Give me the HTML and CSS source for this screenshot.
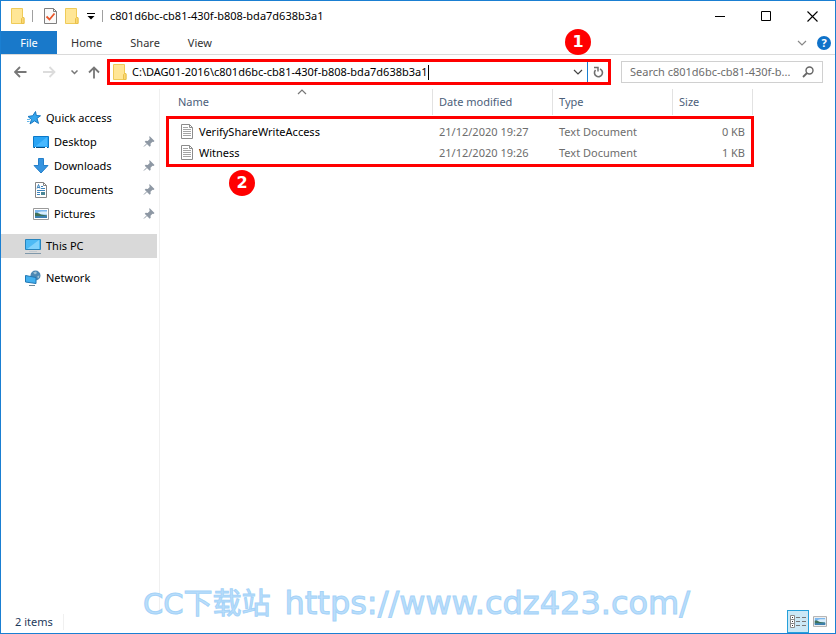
FILE: index.html
```
<!DOCTYPE html>
<html lang="en">

<head>
    <meta charset="UTF-8">
    <meta name="viewport" content="width=device-width, initial-scale=1.0">
    <title>c801d6bc-cb81-430f-b808-bda7d638b3a1</title>
    <link rel="stylesheet" href="styles.css">
</head>

<body>
    <svg class="sprite" aria-hidden="true">
        <symbol id="folder" viewBox="0 0 14 16">
            <path d="M0.5 0.5h11v9h1.5v6H0.5z" fill="#ffe696" stroke="#efcb58" />
            <path d="M10.5 15.5v-5l1-1h1l.5 1v5z" fill="#fbd873" stroke="#e9c04a" />
        </symbol>
        <symbol id="pin" viewBox="0 0 12 12">
            <path d="M6.5 0l5 5-1 1-1-.3-2 2 .2 2-1 1L1.700 5.700l1-1 2 .2 2-2-.4-1.700z" fill="#8e98a4" />
            <path d="M4 7.500L1 10.500" stroke="#8e98a4" />
        </symbol>
        <symbol id="text-file" viewBox="0 0 12 15">
            <path d="M.5.5h8l3 3v11H.5z" fill="#fff" stroke="#8c8c8c" />
            <path d="M8.500.5v3h3" fill="none" stroke="#8c8c8c" />
            <path d="M2 3.500h5M2 5.500h8M2 7.500h8M2 9.500h8M2 11.500h8" stroke="#a4a4a4" />
        </symbol>
        <symbol id="picture" viewBox="0 0 16 12">
            <path d="M.5.5h15v11H.5z" fill="#fff" stroke="#9a9a9a" />
            <path d="M2 2h12v8H2z" fill="#7db8ee" />
            <path d="M5 4.500c2-1.500 5-1 9-1v3H5z" fill="#d9edfa" />
            <path d="M2 5c2-.5 4 .5 6 1.500l6 1v1H2z" fill="#3f7159" />
            <path d="M2 8h12v2H2z" fill="#3b7fb0" />
        </symbol>
        <symbol id="chevron" viewBox="0 0 10 6">
            <path d="M1 1l4 4 4-4" fill="none" stroke="currentColor" stroke-width="1.200" />
        </symbol>
    </svg>

    <div class="window">
        <header class="titlebar">
            <svg class="folder-icon"><use href="#folder" /></svg>
            <span class="divider"></span>
            <div class="quick-buttons">
                <button aria-label="Properties">
                    <svg width="13" height="16" viewBox="0 0 13 16">
                        <path d="M.5.5h9l3 3v12H.5z" fill="#fafafa" stroke="#7f7f7f" />
                        <path d="M9.500.5v3h3" fill="none" stroke="#7f7f7f" />
                        <path d="M2.500 8.500l3 3 5-6" fill="none" stroke="#e8562a" stroke-width="1.800" />
                    </svg>
                </button>
                <button aria-label="New folder"><svg class="folder-icon"><use href="#folder" /></svg></button>
                <button aria-label="Customize">
                    <svg width="8" height="7" viewBox="0 0 8 7">
                        <path d="M0 .5h8" stroke="#000" />
                        <path d="M.5 3h7L4 6.500z" fill="#000" />
                    </svg>
                </button>
            </div>
            <span class="divider"></span>
            <h1 class="title">c801d6bc-cb81-430f-b808-bda7d638b3a1</h1>
            <div class="window-buttons">
                <button aria-label="Minimize"><svg width="11" height="11"><path d="M0 5.500h10" stroke="#000" /></svg></button>
                <button aria-label="Maximize"><svg width="11" height="11"><path d="M.5.5h9v9h-9z" fill="none" stroke="#000" /></svg></button>
                <button aria-label="Close"><svg width="11" height="11"><path d="M.5.500l10 10M10.500.5l-10 10" stroke="#000" stroke-width="1.100" /></svg></button>
            </div>
        </header>

        <nav class="tabs">
            <button class="tab tab-file">File</button>
            <button class="tab">Home</button>
            <button class="tab">Share</button>
            <button class="tab">View</button>
            <div class="tabs-right">
                <button class="expand" aria-label="Expand the ribbon"><svg class="chevron"><use href="#chevron" /></svg></button>
                <button class="help" aria-label="Help">?</button>
            </div>
        </nav>

        <div class="toolbar">
            <div class="nav-buttons">
                <button aria-label="Back"><svg width="13" height="12"><path d="M12.500 6H1M6 1L1 6l5 5" fill="none" stroke="#777" stroke-width="1.800" /></svg></button>
                <button class="forward" aria-label="Forward"><svg width="13" height="12"><path d="M0 6h11.500M6.500 1l5 5-5 5" fill="none" stroke="#dcdcdc" stroke-width="1.800" /></svg></button>
                <button class="recent" aria-label="Recent locations"><svg width="7" height="5"><path d="M.5.5l3 3 3-3" fill="none" stroke="#777" stroke-width="1.500" /></svg></button>
                <button aria-label="Up"><svg width="12" height="13"><path d="M6 12.500V1.500M1 6.500l5-5 5 5" fill="none" stroke="#777" stroke-width="1.800" /></svg></button>
            </div>
            <div class="address">
                <svg class="folder-icon"><use href="#folder" /></svg>
                <input class="address-input" type="text" aria-label="Address" value="C:\DAG01-2016\c801d6bc-cb81-430f-b808-bda7d638b3a1">
                <span class="caret"></span>
                <button class="address-drop" aria-label="Previous locations"><svg class="chevron"><use href="#chevron" /></svg></button>
                <button class="refresh" aria-label="Refresh">
                    <svg width="11" height="12" viewBox="0 0 11 12">
                        <path d="M7 3A4 4 0 1 1 2.500 4" fill="none" stroke="#707070" stroke-width="1.600" />
                        <path d="M1 1.500h4V5.500" fill="none" stroke="#707070" stroke-width="1.500" />
                    </svg>
                </button>
                <span class="badge badge-one">1</span>
            </div>
            <div class="search">
                <input type="search" aria-label="Search" placeholder="Search c801d6bc-cb81-430f-b...">
                <svg width="12" height="12"><circle cx="7.500" cy="4.500" r="3.500" fill="none" stroke="#666" stroke-width="1.400" /><path d="M5 7L1 11" stroke="#666" stroke-width="1.800" /></svg>
            </div>
        </div>

        <div class="content">
            <aside class="sidebar">
                <a href="#" class="item">
                    <svg width="14" height="14" viewBox="0 0 14 14"><path d="M8.500.5l.8 4 4.200.3-3.500 2.600 1.500 5-4-2.500L3 13l1.500-4.500L1 5.500l4.800-.8z" fill="#35a5ec" stroke="#1778c2" /><path d="M0 8.500h3M0 10.500h2.500" stroke="#65b7e9" /></svg>
                    <span>Quick access</span>
                </a>
                <a href="#" class="item child">
                    <svg width="16" height="13"><path d="M.5.5h15v11H.5z" fill="#2aa5f5" stroke="#0b78c8" /><path d="M3 10L14 1v9z" fill="#48b8ff" /><path d="M1 11.500h14" stroke="#064d83" /><path d="M2 11.500h1M12 11.500h2" stroke="#fff" /></svg>
                    <span>Desktop</span>
                    <svg class="pin"><use href="#pin" /></svg>
                </a>
                <a href="#" class="item child">
                    <svg width="16" height="16"><path d="M5.500.5h5v7h4.500L8 15 1 7.500h4.500z" fill="#3794df" stroke="#2580cb" /></svg>
                    <span>Downloads</span>
                    <svg class="pin"><use href="#pin" /></svg>
                </a>
                <a href="#" class="item child">
                    <svg width="16" height="16"><path d="M2.500.5h8l3 3v12h-11z" fill="#fff" stroke="#858585" /><path d="M10.500.5v3h3" fill="none" stroke="#858585" /><path d="M4 6.500l1.500-4 1.500 4M4.500 5.500h2M8 4.500h2M8 6.500h4M4 8.500h8M4 10.500h3M4 12.500h3" fill="none" stroke="#3d84bd" /><path d="M8 10h4v3H8z" fill="#4c8796" /></svg>
                    <span>Documents</span>
                    <svg class="pin"><use href="#pin" /></svg>
                </a>
                <a href="#" class="item child">
                    <svg width="16" height="12"><use href="#picture" /></svg>
                    <span>Pictures</span>
                    <svg class="pin"><use href="#pin" /></svg>
                </a>
                <a href="#" class="item top active">
                    <svg width="16" height="15"><path d="M.5.5h15v10H.5z" fill="#4dbaf5" stroke="#2784bd" /><path d="M2 10L14 1v9z" fill="#80d2fc" /><path d="M4 12.500h8" stroke="#c2cad0" /><path d="M0 14.500h16" stroke="#7f98aa" /></svg>
                    <span>This PC</span>
                </a>
                <a href="#" class="item top">
                    <svg width="16" height="16"><circle cx="10.500" cy="5.500" r="5" fill="#4c88b4" /><path d="M8 2.500l3-1 1 1.500-2 1.500zM12.500 6l2-.5-1 3-1-1z" fill="#a3c4d6" /><path d="M.5 5.500l10.500 2v6L.5 12z" fill="#43b0ef" stroke="#2177b3" /><path d="M4 15.500h6" stroke="#6d8799" /></svg>
                    <span>Network</span>
                </a>
            </aside>

            <main class="files">
                <div class="file-list">
                    <svg class="sort chevron"><use href="#chevron" /></svg>
                    <table>
                        <thead>
                            <tr>
                                <th class="col-name">Name</th>
                                <th class="col-date">Date modified</th>
                                <th class="col-type">Type</th>
                                <th class="col-size">Size</th>
                            </tr>
                        </thead>
                        <tbody>
                            <tr>
                                <td class="name"><svg class="file-icon"><use href="#text-file" /></svg>VerifyShareWriteAccess</td>
                                <td>21/12/2020 19:27</td>
                                <td>Text Document</td>
                                <td class="size">0 KB</td>
                            </tr>
                            <tr>
                                <td class="name"><svg class="file-icon"><use href="#text-file" /></svg>Witness</td>
                                <td>21/12/2020 19:26</td>
                                <td>Text Document</td>
                                <td class="size">1 KB</td>
                            </tr>
                        </tbody>
                    </table>
                    <div class="highlight"></div>
                    <span class="badge badge-two">2</span>
                </div>
            </main>
        </div>

        <footer class="statusbar">
            <span class="count">2 items</span>
            <div class="view-buttons">
                <button class="view selected" aria-label="Details">
                    <svg width="16" height="13"><path d="M.5.5h4v12h-4zM.5 4.500h4M.5 8.500h4" fill="#fff" stroke="#8a8a8a" /><path d="M2 2.500h1M2 6.500h1M2 10.500h1" stroke="#333" /><path d="M6 2.500h4M12 2.500h4M6 6.500h4M12 6.500h4M6 10.500h4M12 10.500h4" stroke="#777" /></svg>
                </button>
                <button class="view" aria-label="Large icons"><svg width="14" height="11"><use href="#picture" /></svg></button>
            </div>
        </footer>

        <div class="watermark"><span>CC下载站</span><span class="url">https://www.cdz423.com/</span></div>
    </div>
</body>

</html>
```

FILE: styles.css
```
* {
    box-sizing: border-box;
}

body {
    margin: 0;
    font-family: "Segoe UI", "Noto Sans", sans-serif;
    font-size: 11px;
    line-height: 16px;
    color: #000;
    background-color: #fff;
}

button,
input {
    font: inherit;
    color: inherit;
    margin: 0;
    padding: 0;
    border: none;
    background: none;
}

input {
    outline: none;
}

button {
    display: flex;
    align-items: center;
    justify-content: center;
}

svg {
    display: block;
    flex-shrink: 0;
}

.sprite {
    position: absolute;
    width: 0;
    height: 0;
}

.window {
    position: relative;
    display: flex;
    flex-direction: column;
    height: 100vh;
    border: 1px solid #1a7fd2;
}

.folder-icon {
    width: 14px;
    height: 16px;
}

.chevron {
    width: 10px;
    height: 6px;
}

/* title bar */
.titlebar {
    display: flex;
    align-items: center;
    height: 30px;
    padding-left: 10px;
}

.divider {
    width: 1px;
    height: 12px;
    margin: 0 7px;
    background-color: #a0a0a0;
}

.quick-buttons {
    display: flex;
    align-items: center;
    gap: 8px;
    padding-left: 4px;
}

.title {
    margin: 0;
    font-size: inherit;
    font-weight: normal;
}

.window-buttons {
    display: flex;
    margin-left: auto;
}

.window-buttons button {
    width: 46px;
    height: 29px;
}

/* ribbon tabs */
.tabs {
    display: flex;
    height: 24px;
    border-bottom: 1px solid #dadada;
}

.tab {
    padding: 0 14px;
    color: #333;
}

.tab-file {
    width: 56px;
    color: #fff;
    background-color: #1979ca;
}

.tabs-right {
    display: flex;
    align-items: center;
    gap: 10px;
    margin-left: auto;
    padding-right: 4px;
    color: #888;
}

.help {
    width: 14px;
    height: 14px;
    border-radius: 50%;
    font-weight: bold;
    color: #fff;
    background-color: #0f72c9;
}

/* address bar */
.toolbar {
    display: flex;
    align-items: center;
    height: 34px;
    padding-right: 12px;
}

.nav-buttons {
    display: flex;
    align-items: center;
    gap: 8px;
    width: 106px;
    padding-left: 13px;
}

.nav-buttons button {
    min-width: 12px;
}

.nav-buttons .forward {
    margin-left: 8px;
}

.nav-buttons .recent {
    margin-left: 4px;
}

.address {
    position: relative;
    display: flex;
    align-items: center;
    flex: 1;
    height: 26px;
    padding-left: 3px;
    border: 3px solid #f00;
}

.address-input {
    field-sizing: content;
    margin-left: 5px;
}

.caret {
    width: 1px;
    height: 15px;
    background-color: #000;
}

.address-drop {
    width: 18px;
    margin-left: auto;
    color: #444;
}

.refresh {
    width: 21px;
    height: 20px;
    border-left: 1px solid #1a7fd2;
}

.search {
    display: flex;
    align-items: center;
    width: 202px;
    height: 22px;
    margin-left: 10px;
    padding: 0 8px;
    border: 1px solid #d0d0d0;
}

.search input {
    flex: 1;
    min-width: 0;
    appearance: none;
}

.search input::placeholder {
    color: #6d6d6d;
    opacity: 1;
}

/* folder tree */
.content {
    display: flex;
    flex: 1;
    min-height: 0;
}

.sidebar {
    width: 159px;
    padding: 17px 2px 0 0;
    border-right: 1px solid #f0f0f0;
}

.item {
    display: flex;
    align-items: center;
    gap: 5px;
    height: 24px;
    padding-left: 26px;
    color: #000;
    text-decoration: none;
}

.item.child {
    padding-left: 32px;
}

.item.top {
    margin-top: 8px;
    padding-left: 24px;
}

.item.active {
    background-color: #d9d9d9;
}

.pin {
    width: 12px;
    height: 12px;
    margin-left: auto;
    margin-right: 2px;
}

/* file list */
.files {
    flex: 1;
    padding-left: 6px;
}

.file-list {
    position: relative;
    width: 588px;
}

.sort {
    position: absolute;
    top: 0;
    left: 131px;
    color: #777;
    transform: rotate(180deg);
}

table {
    width: 586px;
    margin-left: 1px;
    border-collapse: separate;
    border-spacing: 0;
    table-layout: fixed;
}

th {
    height: 26px;
    padding: 0 6px;
    border-right: 1px solid #e2e2e2;
    font-weight: normal;
    text-align: left;
    color: #4c607a;
}

.col-name {
    width: 266px;
    padding-left: 11px;
}

.col-date,
.col-type {
    width: 120px;
}

tbody::before {
    content: "";
    display: block;
    height: 6px;
}

td {
    height: 21px;
    padding: 0 6px;
    color: #6d6d6d;
}

td.name {
    display: flex;
    align-items: center;
    gap: 6px;
    padding-left: 14px;
    color: #000;
}

td.size {
    padding-right: 8px;
    text-align: right;
}

.file-icon {
    width: 12px;
    height: 15px;
}

.highlight {
    position: absolute;
    top: 27px;
    left: 0;
    right: 0;
    height: 51px;
    border: 3px solid #f00;
}

.badge {
    position: absolute;
    width: 26px;
    height: 26px;
    border-radius: 50%;
    font-family: Verdana, "DejaVu Sans", sans-serif;
    font-size: 16px;
    font-weight: bold;
    line-height: 26px;
    text-align: center;
    color: #fff;
    background-color: #f00;
}

.badge-one {
    top: -33px;
    right: 17px;
}

.badge-two {
    top: 81px;
    left: 63px;
}

/* status bar */
.statusbar {
    display: flex;
    align-items: center;
    justify-content: space-between;
    height: 23px;
    padding-left: 14px;
    color: #1e395b;
}

.count {
    padding-right: 10px;
    border-right: 1px solid #f0f0f0;
}

.view-buttons {
    display: flex;
    padding-right: 4px;
}

.view {
    width: 22px;
    height: 23px;
}

.view.selected {
    border: 1px solid #26a0da;
    background-color: #cbe8f6;
}

.watermark {
    position: absolute;
    left: 142px;
    bottom: 11px;
    display: flex;
    align-items: baseline;
    gap: 14px;
    font-family: "DejaVu Sans", "Noto Sans CJK SC", sans-serif;
    font-size: 29px;
    line-height: 36px;
    white-space: nowrap;
    color: #bbdefb;
    -webkit-text-stroke: 1px #a5d3f8;
}

.url {
    font-size: 32px;
}
```
